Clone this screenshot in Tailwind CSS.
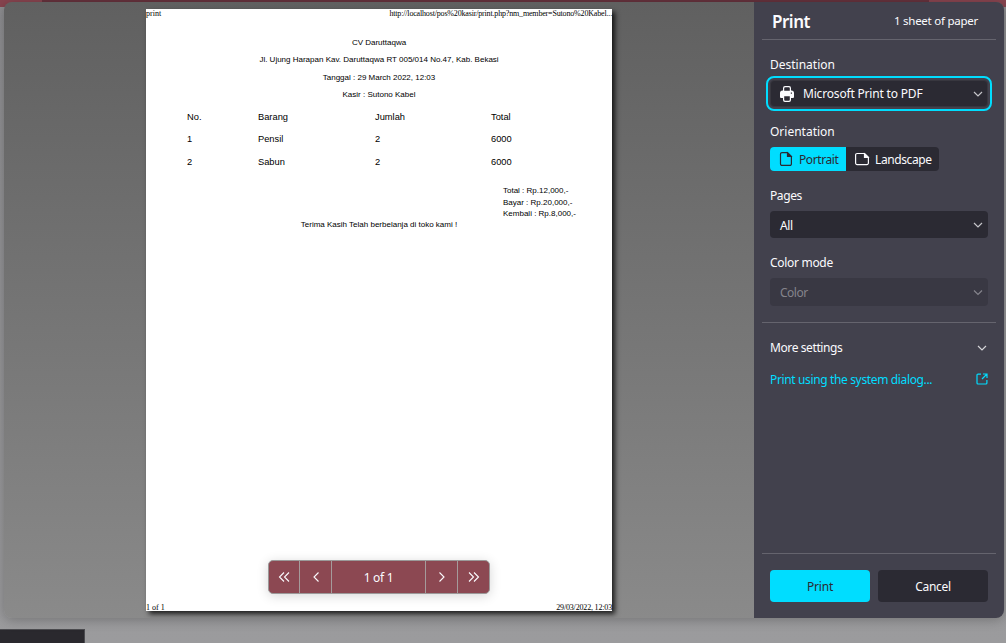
<!DOCTYPE html>
<html lang="en">
<head>
<meta charset="utf-8">
<title>Print</title>
<script src="https://cdn.jsdelivr.net/npm/@tailwindcss/browser@4"></script>
</head>
<body class="relative w-[1006px] h-[643px] overflow-hidden bg-linear-to-b from-[#8d8d90] to-[#9b9b9d] font-['Noto_Sans','Open_Sans',sans-serif] text-[12px] text-[#fbfbfe]">
<div class="absolute inset-x-0 top-0 h-[7px] flex justify-between bg-[#65323c]">
  <div class="w-[42px] h-[7px] bg-[#87444f]"></div>
  <div class="w-[77px] h-[7px] bg-[#87444f]"></div>
</div>
<div class="absolute left-0 bottom-0 w-[85px] h-[14px] bg-[#2a292e] border-t border-r border-[#4b4b4f]"></div>

<main class="absolute left-[4px] top-[2px] w-[1000px] h-[616px] rounded-[8px] overflow-hidden flex shadow-[0_2px_12px_rgba(0,0,0,0.25)] bg-linear-to-b from-[#606060] to-[#8a8a8a]">
  <section class="relative w-[750px] pl-[142px] pt-[7px]">
    <article class="w-[466px] h-[602px] bg-white text-black flex flex-col shadow-[3px_3px_5px_rgba(0,0,0,0.8)] font-['Liberation_Sans',Arial,sans-serif] text-[8px]">
      <div class="flex justify-between h-[10px] leading-[10px] font-['Liberation_Serif',serif] text-[8px] whitespace-nowrap"><span>print</span><span class="tracking-[-0.17px]">http://localhost/pos%20kasir/print.php?nm_member=Sutono%20Kabel...</span></div>
      <div class="mt-[14.5px] leading-[17.4px] text-center">
        <p>CV Daruttaqwa</p>
        <p>Jl. Ujung Harapan Kav. Daruttaqwa RT 005/014 No.47, Kab. Bekasi</p>
        <p class="pt-[0.4px] -mb-[0.4px]">Tanggal : 29 March 2022, 12:03</p>
        <p>Kasir : Sutono Kabel</p>
      </div>
      <div class="mt-[3px] ml-[41px] grid grid-cols-[71px_117px_116px_auto] text-[9.3px] leading-[22.3px]">
        <span>No.</span><span>Barang</span><span>Jumlah</span><span>Total</span>
        <span>1</span><span>Pensil</span><span>2</span><span>6000</span>
        <span>2</span><span>Sabun</span><span>2</span><span>6000</span>
      </div>
      <div class="mt-[12px] ml-[357px] leading-[11.5px]">
        <p>Total : Rp.12,000,-</p><p>Bayar : Rp.20,000,-</p><p>Kembali : Rp.8,000,-</p>
      </div>
      <p class="-mt-[1px] text-center leading-[11px]">Terima Kasih Telah berbelanja di toko kami !</p>
      <div class="mt-auto flex justify-between h-[9px] leading-[12px] font-['Liberation_Serif',serif]"><span>1 of 1</span><span class="tracking-[-0.17px]">29/03/2022, 12:03</span></div>
    </article>
    <nav class="absolute left-[264px] top-[558px] w-[222px] h-[34px] flex rounded-[5px] border border-[#9b9999] bg-[#8c4852] divide-x divide-[#a59b9b] shadow-[0_2px_12px_rgba(0,0,0,0.16)]">
      <button class="w-[31px] grid place-items-center"><svg width="16" height="16" fill="none" stroke="#fbfbfe" stroke-width="1.1"><path d="M8 3.5 3.500 8l4.500 4.500M13 3.500 8.500 8l4.500 4.500"/></svg></button>
      <button class="w-[32px] grid place-items-center"><svg width="16" height="16" fill="none" stroke="#fbfbfe" stroke-width="1.1"><path d="M10.500 3.500 6 8l4.500 4.500"/></svg></button>
      <span class="w-[94px] text-center leading-[34px] tracking-[-0.3px]">1 of 1</span>
      <button class="w-[32px] grid place-items-center"><svg width="16" height="16" fill="none" stroke="#fbfbfe" stroke-width="1.1"><path d="M5.500 3.500 10 8 5.500 12.500"/></svg></button>
      <button class="w-[31px] grid place-items-center"><svg width="16" height="16" fill="none" stroke="#fbfbfe" stroke-width="1.1"><path d="M3 3.500 7.500 8 3 12.500M8 3.500 12.500 8 8 12.500"/></svg></button>
    </nav>
  </section>

  <aside class="w-[250px] bg-[#42414d] px-[8px] flex flex-col">
    <header class="h-[38px] border-b border-[#65646e] flex items-center justify-between pl-[10px] pr-[18px]">
      <h1 class="text-[17px] font-semibold pt-[3px] tracking-[-0.5px]">Print</h1><span class="text-[11.500px] tracking-[-0.25px]">1 sheet of paper</span>
    </header>
    <div class="px-[8px] pt-[17px] flex flex-col h-[283px] border-b border-[#65646e]">
      <label class="h-[16px] leading-[16px]">Destination</label>
      <div class="mt-[7px] h-[27px] flex items-center rounded-[4px] bg-[#2b2a33] outline-2 outline-offset-2 outline-[#00ddff] border border-[#38373f] pl-[8px] pr-[4px]">
        <svg width="16" height="16" viewBox="0 0 16 16" fill="#fbfbfe"><path d="M6 0h4a2 2 0 0 1 2 2v2.500h.5A2.500 2.500 0 0 1 15 7v4a1 1 0 0 1-1 1h-2v2a2 2 0 0 1-2 2H6a2 2 0 0 1-2-2v-2H2a1 1 0 0 1-1-1V7a2.500 2.500 0 0 1 2.500-2.500H4V2a2 2 0 0 1 2-2z"/><path fill="#2b2a33" d="M6.200 1.200h3.600a1 1 0 0 1 1 1V4.800H5.200V2.200a1 1 0 0 1 1-1zM5.200 10.200h5.600v3.600a1 1 0 0 1-1 1H6.200a1 1 0 0 1-1-1zM11.800 6.500h1.200v1.300h-1.200z"/></svg>
        <span class="ml-[8px] flex-1 tracking-[-0.18px]">Microsoft Print to PDF</span>
        <svg width="10" height="10" fill="none" stroke="#c5c5c9" stroke-width="1.200"><path d="M1 3l4 4 4-4"/></svg>
      </div>
      <label class="mt-[17px] h-[16px] leading-[16px]">Orientation</label>
      <div class="mt-[7px] h-[24px] flex rounded-[4px] overflow-hidden w-[169px] bg-[#2b2a33]">
        <div class="w-[76px] bg-[#00ddff] text-[#2b2a33] flex items-center pl-[8px] gap-[5px]">
          <svg width="16" height="16" fill="none" stroke="currentColor" stroke-width="1.200"><path d="M4 1.600h5.500L13.400 5.500v7.400a1.500 1.500 0 0 1-1.500 1.500H4a1.500 1.500 0 0 1-1.500-1.500V3.100A1.500 1.500 0 0 1 4 1.600"/><path fill="currentColor" d="M9.500 2v3.500h3.600z"/></svg><span class="pt-[1px] tracking-[-0.42px]">Portrait</span>
        </div>
        <div class="w-[93px] flex items-center pl-[8px] gap-[5px]">
          <svg width="16" height="16" fill="none" stroke="currentColor" stroke-width="1.200"><path d="M3.100 2.500h7.500L14.400 6.300v5.800a1.500 1.500 0 0 1-1.500 1.500H3.100a1.500 1.500 0 0 1-1.500-1.500V4a1.500 1.500 0 0 1 1.500-1.500"/><path fill="currentColor" d="M10.500 2.900v3.500h3.600z"/></svg><span class="pt-[1px] tracking-[-0.4px]">Landscape</span>
        </div>
      </div>
      <label class="mt-[17px] h-[16px] leading-[16px] tracking-[-0.4px]">Pages</label>
      <div class="mt-[7px] h-[27px] shrink-0 flex items-center justify-between rounded-[4px] bg-[#2b2a33] pl-[10px] pr-[5px]"><span class="pt-[3px] tracking-[-0.4px]">All</span><svg width="10" height="10" fill="none" stroke="#c5c5c9" stroke-width="1.200"><path d="M1 3l4 4 4-4"/></svg></div>
      <label class="mt-[17px] h-[16px] leading-[16px] tracking-[-0.3px]">Color mode</label>
      <div class="mt-[7px] h-[28px] shrink-0 flex items-center justify-between rounded-[4px] bg-[#393843] text-[#85848c] pl-[10px] pr-[5px]"><span class="pt-[2px] tracking-[-0.5px]">Color</span><svg width="10" height="10" fill="none" stroke="currentColor" stroke-width="1.200"><path d="M1 3.500l4 4 4-4"/></svg></div>
    </div>
    <div class="mt-[17px] px-[8px] h-[16px] flex items-center justify-between"><span class="tracking-[-0.4px]">More settings</span><svg class="mr-[1px]" width="10" height="10" fill="none" stroke="#d5d5d9" stroke-width="1.200"><path d="M1 3l4 4 4-4"/></svg></div>
    <a class="mt-[16px] px-[8px] h-[16px] flex items-center justify-between text-[#00ddff]"><span class="tracking-[-0.36px]">Print using the system dialog...</span><svg class="-mt-[2px]" width="12" height="12" fill="none" stroke="currentColor" stroke-width="1.200"><path d="M5 1.100H2a1 1 0 0 0-1 1V10a1 1 0 0 0 1 1h7.900a1 1 0 0 0 1-1V7M7 1h4v4M11 1 6 6"/></svg></a>
    <footer class="mt-auto h-[65px] border-t border-[#65646e] px-[8px] pt-[16px] flex gap-[8px]">
      <button class="w-[100px] h-[32px] pt-[2px] rounded-[4px] bg-[#00ddff] text-[#2b2a33] tracking-[-0.2px]">Print</button>
      <button class="w-[110px] h-[32px] pt-[2px] rounded-[4px] bg-[#2b2a33] tracking-[-0.3px]">Cancel</button>
    </footer>
  </aside>
</main>
</body>
</html>
